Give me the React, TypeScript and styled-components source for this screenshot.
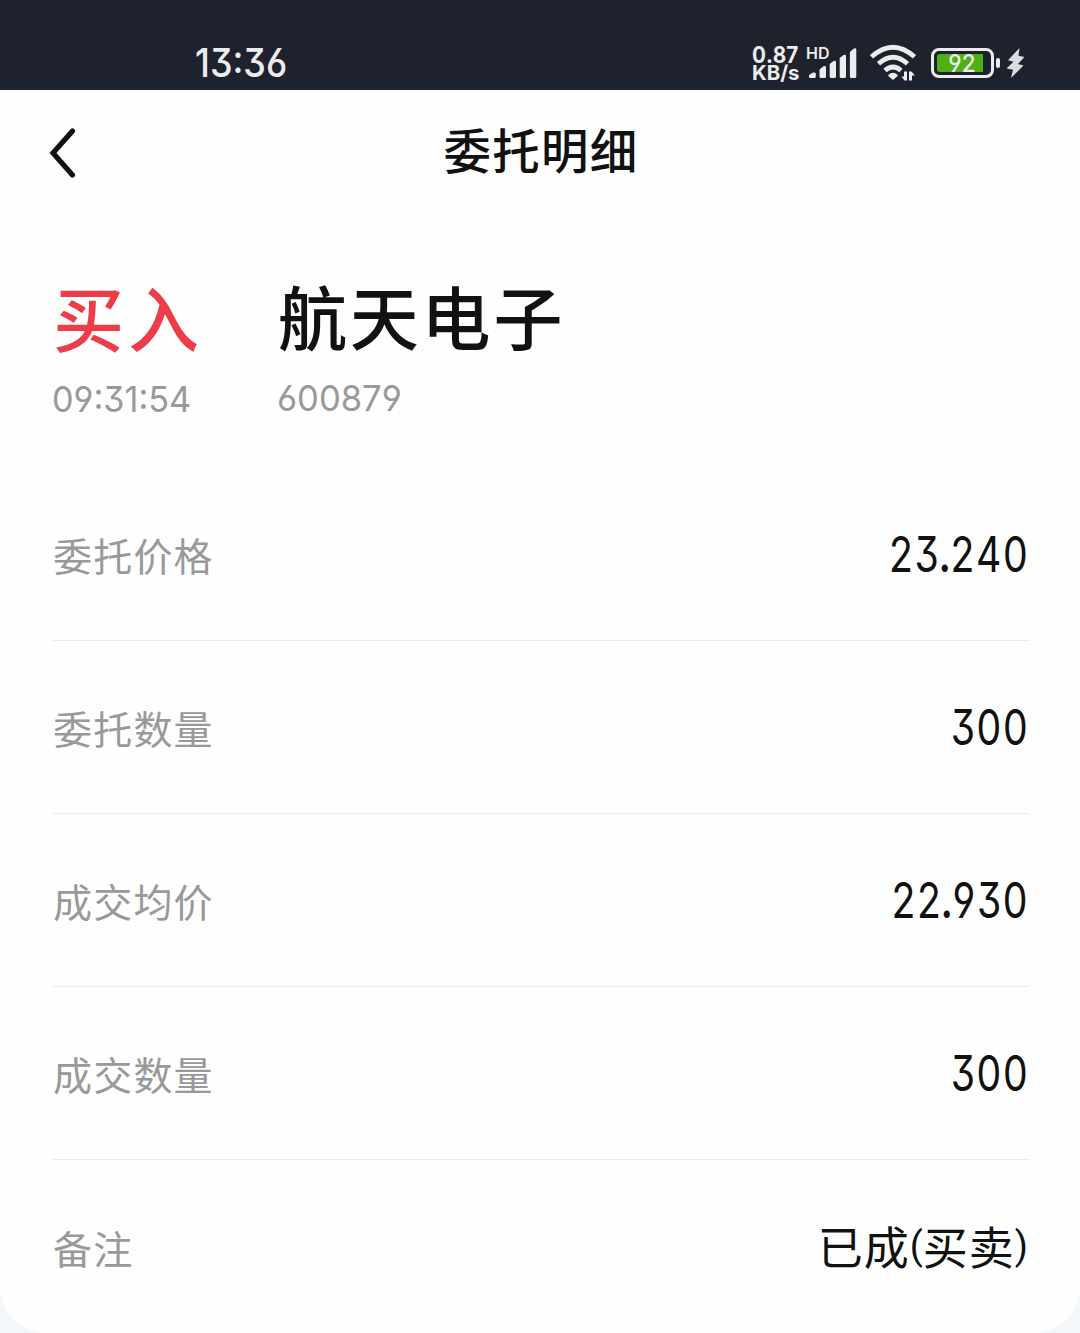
import React from "react";
import styled, { createGlobalStyle } from "styled-components";

const GlobalStyle = createGlobalStyle`
  *, *::before, *::after { box-sizing: border-box; }
  body {
    margin: 0;
    background: #f3f7fa;
    font-family: Inter, "Noto Sans CJK SC", sans-serif;
    -webkit-font-smoothing: antialiased;
  }
`;

const Screen = styled.div`
  width: 1080px;
  height: 1333px;
  overflow: hidden;
  display: flex;
  flex-direction: column;
  background: #f3f7fa;
`;

const StatusBar = styled.header`
  height: 90px;
  flex: none;
  display: flex;
  justify-content: space-between;
  padding: 39px 55px 0 195px;
  background: #1e222d;
  color: #ececee;
`;

/* Digits with flat-topped threes and straight-stemmed sixes and nines. */
const Digits = styled.span<{
  $size: number;
  $stretch?: number;
  $weight?: number;
  $gap?: number;
  $line?: number;
  $origin?: string;
}>`
  display: block;
  font-family: Inter, sans-serif;
  font-feature-settings: "cv03", "cv04", "cv09";
  font-kerning: none;
  font-size: ${(p) => p.$size}px;
  font-weight: ${(p) => p.$weight ?? 400};
  letter-spacing: ${(p) => p.$gap ?? 0}px;
  line-height: ${(p) => p.$line ?? 48}px;
  white-space: nowrap;
  transform: scaleX(${(p) => p.$stretch ?? 1});
  transform-origin: ${(p) => p.$origin ?? "left"} center;
`;

const StatusIcons = styled.div`
  display: flex;
  align-items: flex-start;
`;

const NetSpeed = styled.div`
  width: 54px;
  padding-top: 6px;
  white-space: nowrap;
`;

const SignalColumn = styled.div`
  width: 64px;
  padding-top: 5px;
  position: relative;
`;

const HdBadge = styled.span`
  position: absolute;
  left: 0;
  top: 6px;
  font-size: 16px;
  font-weight: 600;
  line-height: 16px;
`;

const WifiBox = styled.div`
  width: 61px;
  padding-top: 4px;
`;

const Battery = styled.div`
  display: flex;
  align-items: center;
  height: 47px;
`;

const BatteryShell = styled.div`
  width: 63px;
  height: 30px;
  padding: 3px;
  border: 3px solid #ececee;
  border-radius: 8px;
`;

const BatteryLevel = styled.div`
  width: 46px;
  height: 18px;
  border-radius: 3px 0 0 3px;
  background: #4faf14;
  display: flex;
  align-items: center;
  justify-content: flex-end;
  padding-right: 7px;
`;

const BatteryTip = styled.div`
  width: 4px;
  height: 10px;
  margin: 0 6px 0 2px;
  border-radius: 2px;
  background: #ececee;
`;

const Sheet = styled.main`
  flex: 1;
  display: flex;
  flex-direction: column;
  background: #fefefe;
  border-radius: 0 0 46px 46px;
  padding: 0 51px 0 52px;
  color: #111;
`;

const NavBar = styled.nav`
  height: 122px;
  flex: none;
  display: grid;
  grid-template-columns: 60px 1fr 60px;
  align-items: center;
`;

const BackButton = styled.button`
  border: 0;
  padding: 0;
  margin-left: -4px;
  margin-top: 4px;
  background: none;
  display: flex;
`;

const Title = styled.h1`
  margin: 0;
  padding: 2px 0 0 1px;
  text-align: center;
  font-size: 47.5px;
  letter-spacing: 1.3px;
  font-weight: 500;
  line-height: 60px;
`;

const Summary = styled.section`
  height: 256px;
  flex: none;
  display: grid;
  grid-template-columns: 225px 1fr;
  align-content: start;
  padding-top: 60px;
`;

const Headline = styled.h2<{ $color?: string; $size: number; $gap: number }>`
  margin: 0;
  padding-left: 1px;
  font-size: ${(p) => p.$size}px;
  letter-spacing: ${(p) => p.$gap}px;
  font-weight: 500;
  line-height: 96px;
  white-space: nowrap;
  color: ${(p) => p.$color ?? "#111"};
`;

const Caption = styled.div<{ $shift?: number }>`
  padding-top: ${(p) => 6 + (p.$shift ?? 0)}px;
  color: #999;
`;

const Row = styled.div<{ $last?: boolean }>`
  height: 173px;
  flex: none;
  display: flex;
  justify-content: space-between;
  align-items: center;
  border-bottom: ${(p) => (p.$last ? "0" : "1px solid #ebebeb")};
`;

const Label = styled.span`
  font-size: 39px;
  letter-spacing: 1.2px;
  line-height: 60px;
  color: #999;
  padding: 6px 0 0 1px;
`;

const Value = styled.span`
  padding-top: 2px;
`;

const Point = styled.span`
  margin: 0 -2.5px;
  font-weight: 600;
`;

const Note = styled.span`
  font-family: "Noto Sans CJK SC", sans-serif;
  font-size: 45px;
  letter-spacing: 1px;
  line-height: 60px;
  display: flex;
  align-items: center;
  margin: -2px 1px 0 0;
`;

const Paren = styled.span`
  font-family: Roboto, sans-serif;
  font-size: 38px;
  letter-spacing: 0;
  line-height: 56px;
  font-weight: 400;
`;

const rows = [
  { label: "委托价格", value: "23.240" },
  { label: "委托数量", value: "300" },
  { label: "成交均价", value: "22.930" },
  { label: "成交数量", value: "300" },
];

const Amount = ({ value }: { value: string }) => {
  const [whole, fraction] = value.split(".");
  return (
    <Digits $size={49} $stretch={0.8} $gap={2} $origin="right">
      {whole}
      {fraction && <Point>.</Point>}
      {fraction}
    </Digits>
  );
};

const Signal = () => (
  <svg width="52" height="38" viewBox="0 0 52 38" fill="#ececee">
    <path d="M3 33.500V31L7 28.500H8.500Q9.800 28.500 9.800 30V32.500Q9.800 34 8.300 34H4Q3 34 3 33Z" />
    <path d="M13.500 25.500L17.500 22.300Q20 21.500 20 23.500V32.500Q20 34 18.500 34H15Q13.500 34 13.500 32.500Z" />
    <path d="M23.700 20L27.500 17Q30 16 30 18V32.500Q30 34 28.500 34H25.200Q23.700 34 23.700 32.500Z" />
    <path d="M33.700 14L37.500 11Q40 10 40 12V32.500Q40 34 38.500 34H35.200Q33.700 34 33.700 32.500Z" />
    <path d="M43.900 8L47.800 4.500Q50.300 3.500 50.300 5.500V32.500Q50.300 34 48.800 34H45.400Q43.900 34 43.900 32.500Z" />
  </svg>
);

const Wifi = () => (
  <svg width="48" height="40" viewBox="0 0 48 40" fill="none" stroke="#ececee">
    <g strokeWidth="4.800">
      <path d="M1.500 13.800Q23 -5.500 44.500 13.800" />
      <path d="M8.500 20.800Q23 7.500 37.500 20.800" />
      <path d="M15 27.500Q23 20.500 31 27.500" />
    </g>
    <path d="M18.300 32Q23 27.500 27.700 32V33L23.700 36.500Q23 37 22.300 36.500L18.300 33Z" fill="#ececee" stroke="none" />
    <path d="M37 28.500V37.500H34.500L31.500 33.500H34V28.500ZM39 37.500V28.500H41.500L45 32.500H42V37.500Z" fill="#ececee" stroke="none" />
  </svg>
);

const Bolt = () => (
  <svg width="19" height="32" viewBox="0 0 19 32" fill="#dcdcde">
    <path d="M13.500 1L2 13.200L7.500 14.800L0.500 21.500L7 22.800L5 31L17.500 18.500L12 17L18.500 10L12.500 8.800Z" />
  </svg>
);

export default function App() {
  return (
    <>
      <GlobalStyle />
      <Screen>
        <StatusBar>
          <Digits $size={39} $weight={450} $stretch={0.92}>13:36</Digits>
          <StatusIcons>
            <NetSpeed>
              <Digits $size={22.5} $weight={700} $stretch={0.92} $line={20}>0.87</Digits>
              <Digits $size={20} $weight={700} $stretch={1.02} $line={17}>KB/s</Digits>
            </NetSpeed>
            <SignalColumn>
              <HdBadge>HD</HdBadge>
              <Signal />
            </SignalColumn>
            <WifiBox>
              <Wifi />
            </WifiBox>
            <Battery>
              <BatteryShell>
                <BatteryLevel>
                  <Digits $size={24.5} $weight={450} $stretch={0.92} $origin="right">92</Digits>
                </BatteryLevel>
              </BatteryShell>
              <BatteryTip />
              <Bolt />
            </Battery>
          </StatusIcons>
        </StatusBar>
        <Sheet>
          <NavBar>
            <BackButton aria-label="返回">
              <svg width="32" height="56" viewBox="0 0 32 56" fill="none">
                <path d="M24.500 6L5 28L24.500 50" stroke="#111" strokeWidth="5.200" strokeLinecap="round" />
              </svg>
            </BackButton>
            <Title>委托明细</Title>
          </NavBar>
          <Summary>
            <Headline $color="#ee3d49" $size={71} $gap={4}>买入</Headline>
            <Headline $size={69} $gap={2.8}>航天电子</Headline>
            <Caption $shift={1}>
              <Digits $size={36} $stretch={0.95}>09:31:54</Digits>
            </Caption>
            <Caption>
              <Digits $size={36} $stretch={0.96}>600879</Digits>
            </Caption>
          </Summary>
          {rows.map((row) => (
            <Row key={row.label}>
              <Label>{row.label}</Label>
              <Value>
                <Amount value={row.value} />
              </Value>
            </Row>
          ))}
          <Row $last>
            <Label>备注</Label>
            <Note>
              已成<Paren>(</Paren>买卖<Paren>)</Paren>
            </Note>
          </Row>
        </Sheet>
      </Screen>
    </>
  );
}
